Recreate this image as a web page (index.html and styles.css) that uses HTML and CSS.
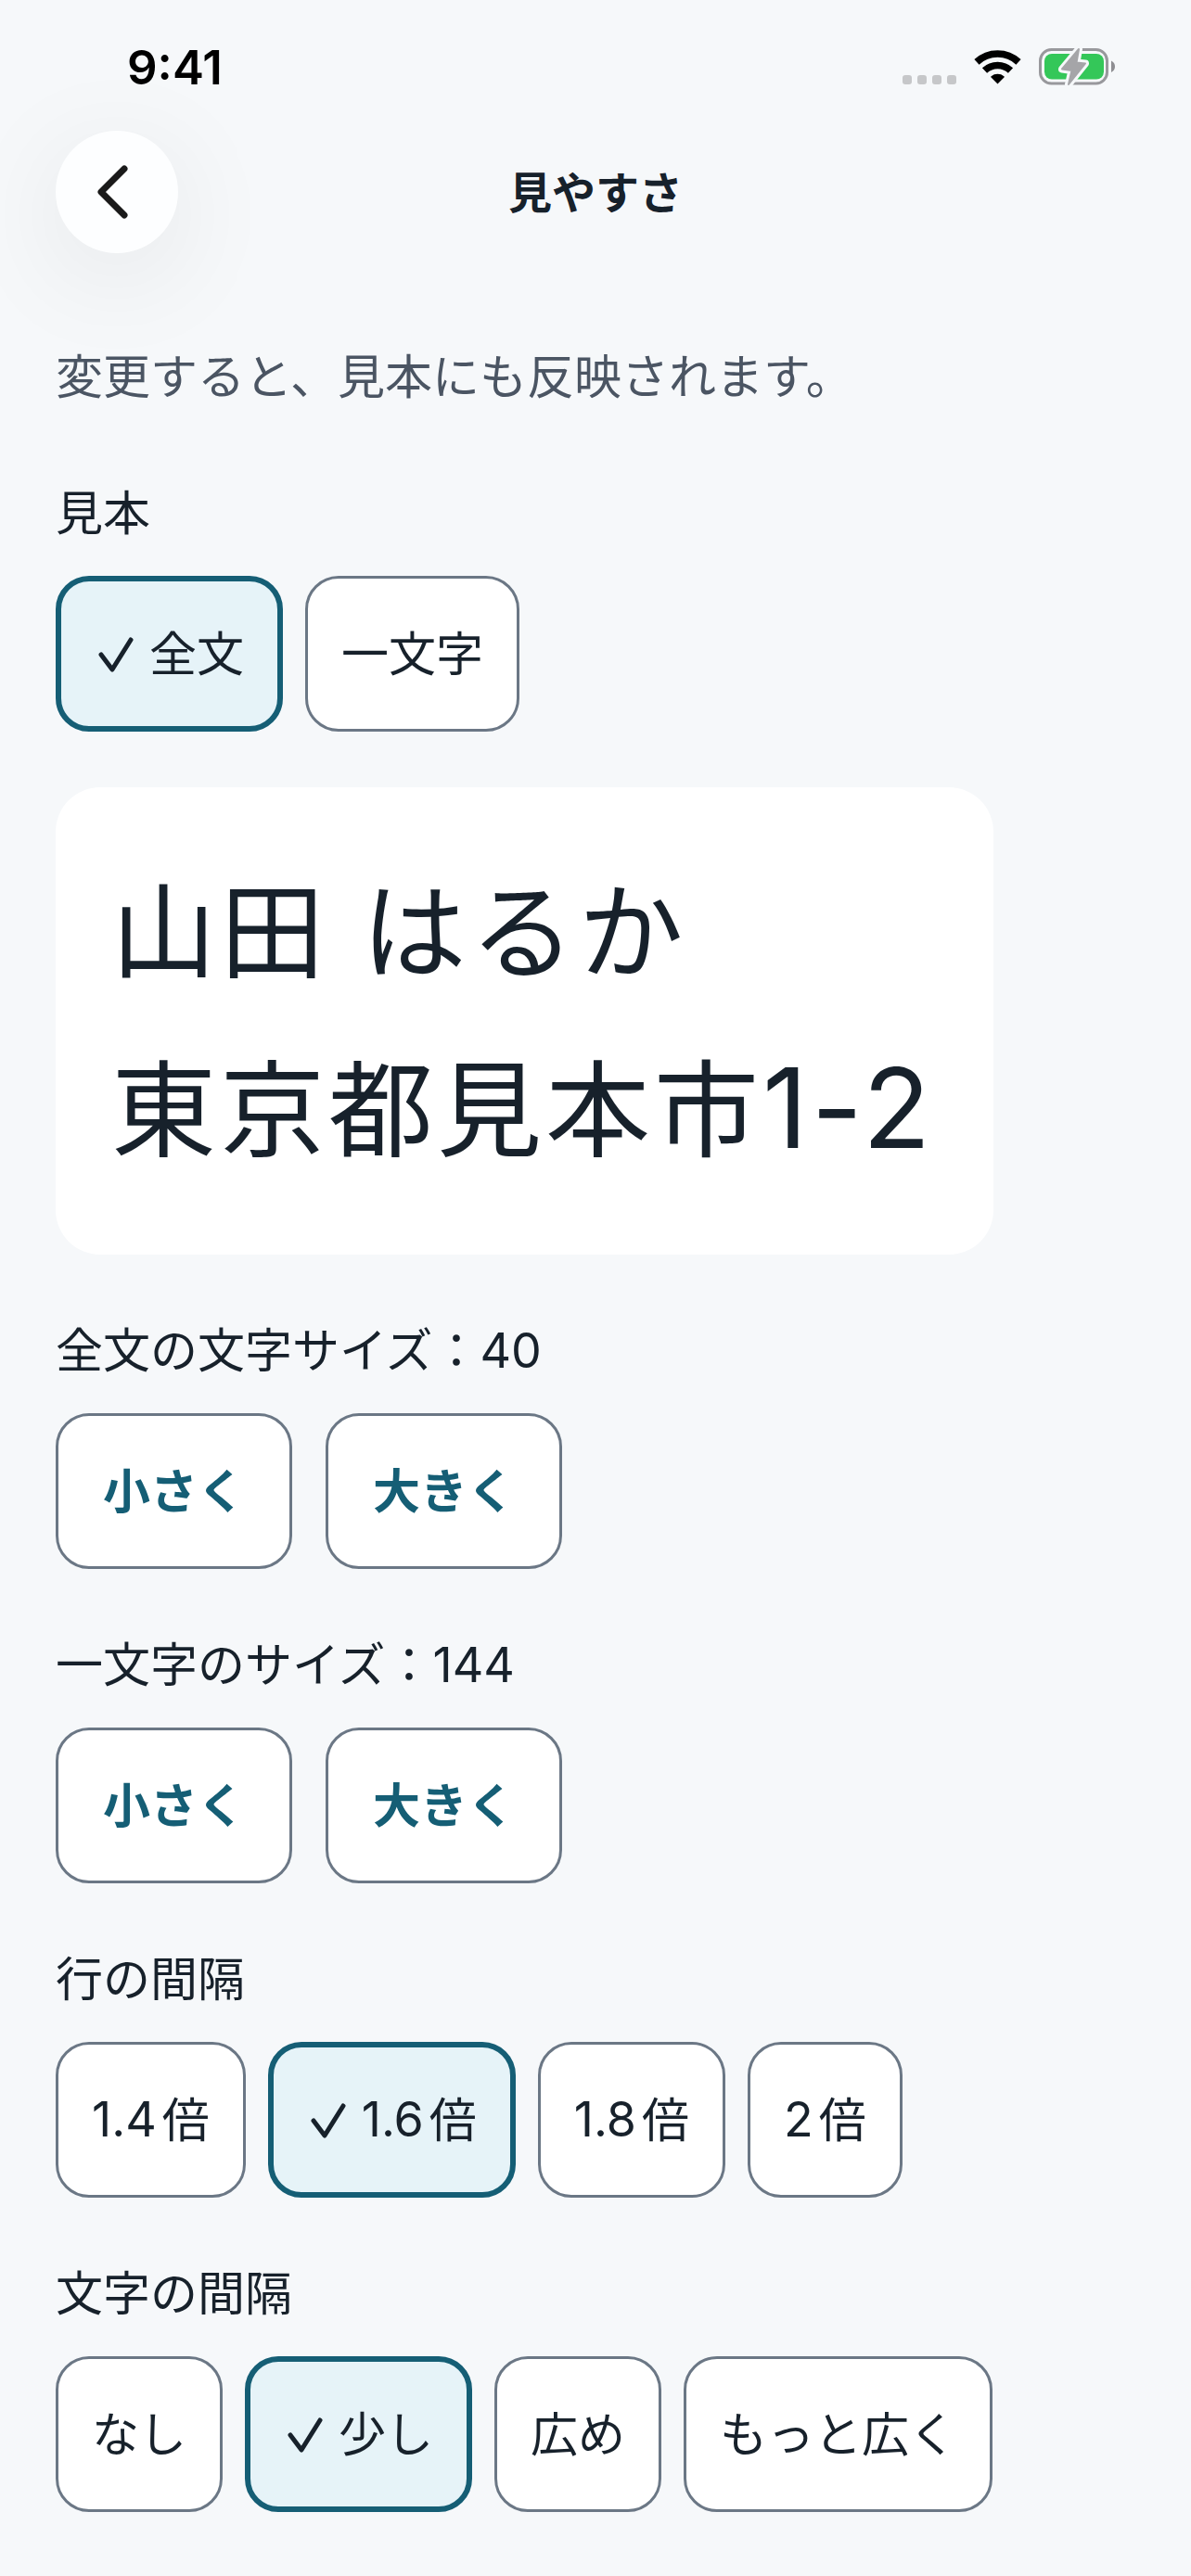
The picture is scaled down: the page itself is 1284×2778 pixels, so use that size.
FILE: index.html
```html
<!DOCTYPE html>
<html lang="ja">
<head>
    <meta charset="UTF-8">
    <meta name="viewport" content="width=device-width, initial-scale=1">
    <title>見やすさ</title>
    <link rel="stylesheet" href="styles.css">
</head>
<body>
    <div class="status-bar">
        <span class="time">9:41</span>
        <div class="status-icons">
            <svg class="dots" width="58" height="40" viewBox="0 0 58 40" aria-hidden="true">
                <rect x="0" y="29" width="10" height="10" rx="3"/>
                <rect x="16" y="29" width="10" height="10" rx="3"/>
                <rect x="32" y="29" width="10" height="10" rx="3"/>
                <rect x="48" y="29" width="10" height="10" rx="3"/>
            </svg>
            <svg class="wifi" width="51" height="40" viewBox="0 0 51 40" aria-hidden="true">
                <path d="M3 14.9A33 33 0 0 1 48 14.9" fill="none" stroke="#000" stroke-width="7.6"/>
                <path d="M11.5 24A20.5 20.5 0 0 1 39.5 24" fill="none" stroke="#000" stroke-width="7.6"/>
                <path d="M25.5 38.5L18.3 31.2Q18 30.6 18.6 30.2A11 11 0 0 1 32.4 30.2Q33 30.6 32.7 31.2Z"/>
            </svg>
            <svg class="battery" width="82" height="42" viewBox="0 0 82 42" aria-hidden="true">
                <rect x="1.5" y="2.5" width="72" height="36.5" rx="12" fill="none" stroke="#98989c" stroke-width="3"/>
                <rect x="6" y="7" width="64" height="27.5" rx="8" fill="#34c759"/>
                <path d="M78 14.5Q82 16.5 82 20.7T78 27Z" fill="#8e8e92"/>
                <path class="bolt-edge" d="M43 2L40.5 16.5L50 17.5L32 40L35.5 25L25 23.5Z"/>
                <path class="bolt" d="M43 2L40.5 16.5L50 17.5L32 40L35.5 25L25 23.5Z"/>
            </svg>
        </div>
    </div>

    <header class="header">
        <button type="button" class="back" aria-label="戻る">
            <svg width="48" height="66" viewBox="0 0 48 66" fill="none" aria-hidden="true">
                <path d="M36 8L11 33L36 58" stroke="#1a1a1a" stroke-width="7" stroke-linecap="round" stroke-linejoin="round"/>
            </svg>
        </button>
        <h1>見やすさ</h1>
    </header>

    <main>
        <p class="description">変更すると、見本にも反映されます。</p>

        <section>
            <h2>見本</h2>
            <div class="options">
                <button type="button" class="option selected" aria-pressed="true">
                    <svg class="check" viewBox="0 0 44 44" aria-hidden="true"><path d="M7 23L19 39L39 7"/></svg>全文
                </button>
                <button type="button" class="option" aria-pressed="false">一文字</button>
            </div>
        </section>

        <div class="sample">
            <p>山田 はるか</p>
            <p>東京都見本市<span class="digits">1-2</span></p>
        </div>

        <section>
            <h2>全文の文字サイズ：<span class="digits">40</span></h2>
            <div class="steps">
                <button type="button" class="step">小さく</button>
                <button type="button" class="step">大きく</button>
            </div>
        </section>

        <section>
            <h2>一文字のサイズ：<span class="digits">144</span></h2>
            <div class="steps">
                <button type="button" class="step">小さく</button>
                <button type="button" class="step">大きく</button>
            </div>
        </section>

        <section>
            <h2>行の間隔</h2>
            <div class="options">
                <button type="button" class="option" aria-pressed="false"><span class="ratio">1.4</span>倍</button>
                <button type="button" class="option selected" aria-pressed="true">
                    <svg class="check" viewBox="0 0 44 44" aria-hidden="true"><path d="M7 23L19 39L39 7"/></svg><span class="ratio">1.6</span>倍
                </button>
                <button type="button" class="option" aria-pressed="false"><span class="ratio">1.8</span>倍</button>
                <button type="button" class="option" aria-pressed="false"><span class="ratio">2</span>倍</button>
            </div>
        </section>

        <section>
            <h2>文字の間隔</h2>
            <div class="options">
                <button type="button" class="option" aria-pressed="false">なし</button>
                <button type="button" class="option selected" aria-pressed="true">
                    <svg class="check" viewBox="0 0 44 44" aria-hidden="true"><path d="M7 23L19 39L39 7"/></svg>少し
                </button>
                <button type="button" class="option" aria-pressed="false">広め</button>
                <button type="button" class="option" aria-pressed="false">もっと広く</button>
            </div>
        </section>
    </main>
</body>
</html>
```
FILE: styles.css
```css
* {
    box-sizing: border-box;
}

body {
    margin: 0;
    min-height: 100vh;
    background-color: #f6f8fa;
    color: #17212b;
    font-family: Inter, "Noto Sans CJK JP", sans-serif;
    font-size: 51px;
    line-height: 87px;
}

h1,
h2,
p {
    margin: 0;
}

button {
    font: inherit;
    color: inherit;
    cursor: pointer;
}

.status-bar {
    display: flex;
    align-items: center;
    justify-content: space-between;
    height: 141px;
    padding: 3px 82px 0 137px;
    color: #000;
}

.time {
    font-size: 51px;
    font-weight: 600;
}

.status-icons {
    display: flex;
    align-items: center;
    gap: 19px;
}

.dots {
    fill: #c6c7c9;
}

.bolt-edge {
    fill: #f6f8fa;
    stroke: #f6f8fa;
    stroke-width: 8;
    stroke-linejoin: round;
}

.bolt {
    fill: #a5a5a8;
    stroke: #a5a5a8;
    stroke-width: 2;
    stroke-linejoin: round;
}

.header {
    display: grid;
    grid-template-columns: 132px 1fr 132px;
    align-items: center;
    padding: 0 60px;
}

.header h1 {
    font-size: 47px;
    font-weight: 700;
    text-align: center;
}

.back {
    display: flex;
    align-items: center;
    justify-content: center;
    width: 132px;
    height: 132px;
    padding: 0 8px 0 0;
    border: none;
    border-radius: 50%;
    background-color: #fdfeff;
    box-shadow: 0 24px 120px rgba(0, 0, 0, 0.08);
}

main {
    display: flex;
    flex-direction: column;
    align-items: flex-start;
    gap: 60px;
    padding: 90px 60px 60px;
}

.description {
    color: #4b5563;
}

h2 {
    margin-bottom: 24px;
    font-size: 51px;
    font-weight: 400;
}

.options,
.steps {
    display: flex;
    flex-wrap: wrap;
    gap: 24px;
}

.steps {
    gap: 36px;
}

.option,
.step {
    display: flex;
    align-items: center;
    min-height: 168px;
    padding: 0 36px;
    border: 3px solid #6b7785;
    border-radius: 36px;
    background-color: #fff;
}

.option.selected {
    border: 6px solid #155e75;
    background-color: #e6f3f8;
}

.step {
    padding: 0 48px;
    color: #155e75;
    font-weight: 700;
}

.check {
    width: 44px;
    height: 44px;
    margin-right: 15px;
    fill: none;
    stroke: currentColor;
    stroke-width: 5;
    stroke-linecap: round;
    stroke-linejoin: round;
}

.digits,
.ratio {
    font-size: 52px;
    line-height: 1;
}

.ratio {
    margin-right: 6px;
}

.sample {
    padding: 60px 64px 60px 60px;
    border-radius: 48px;
    background-color: #fff;
    font-size: 113px;
    line-height: 192px;
    letter-spacing: 4px;
}

.sample .digits {
    font-size: 120px;
}
```
